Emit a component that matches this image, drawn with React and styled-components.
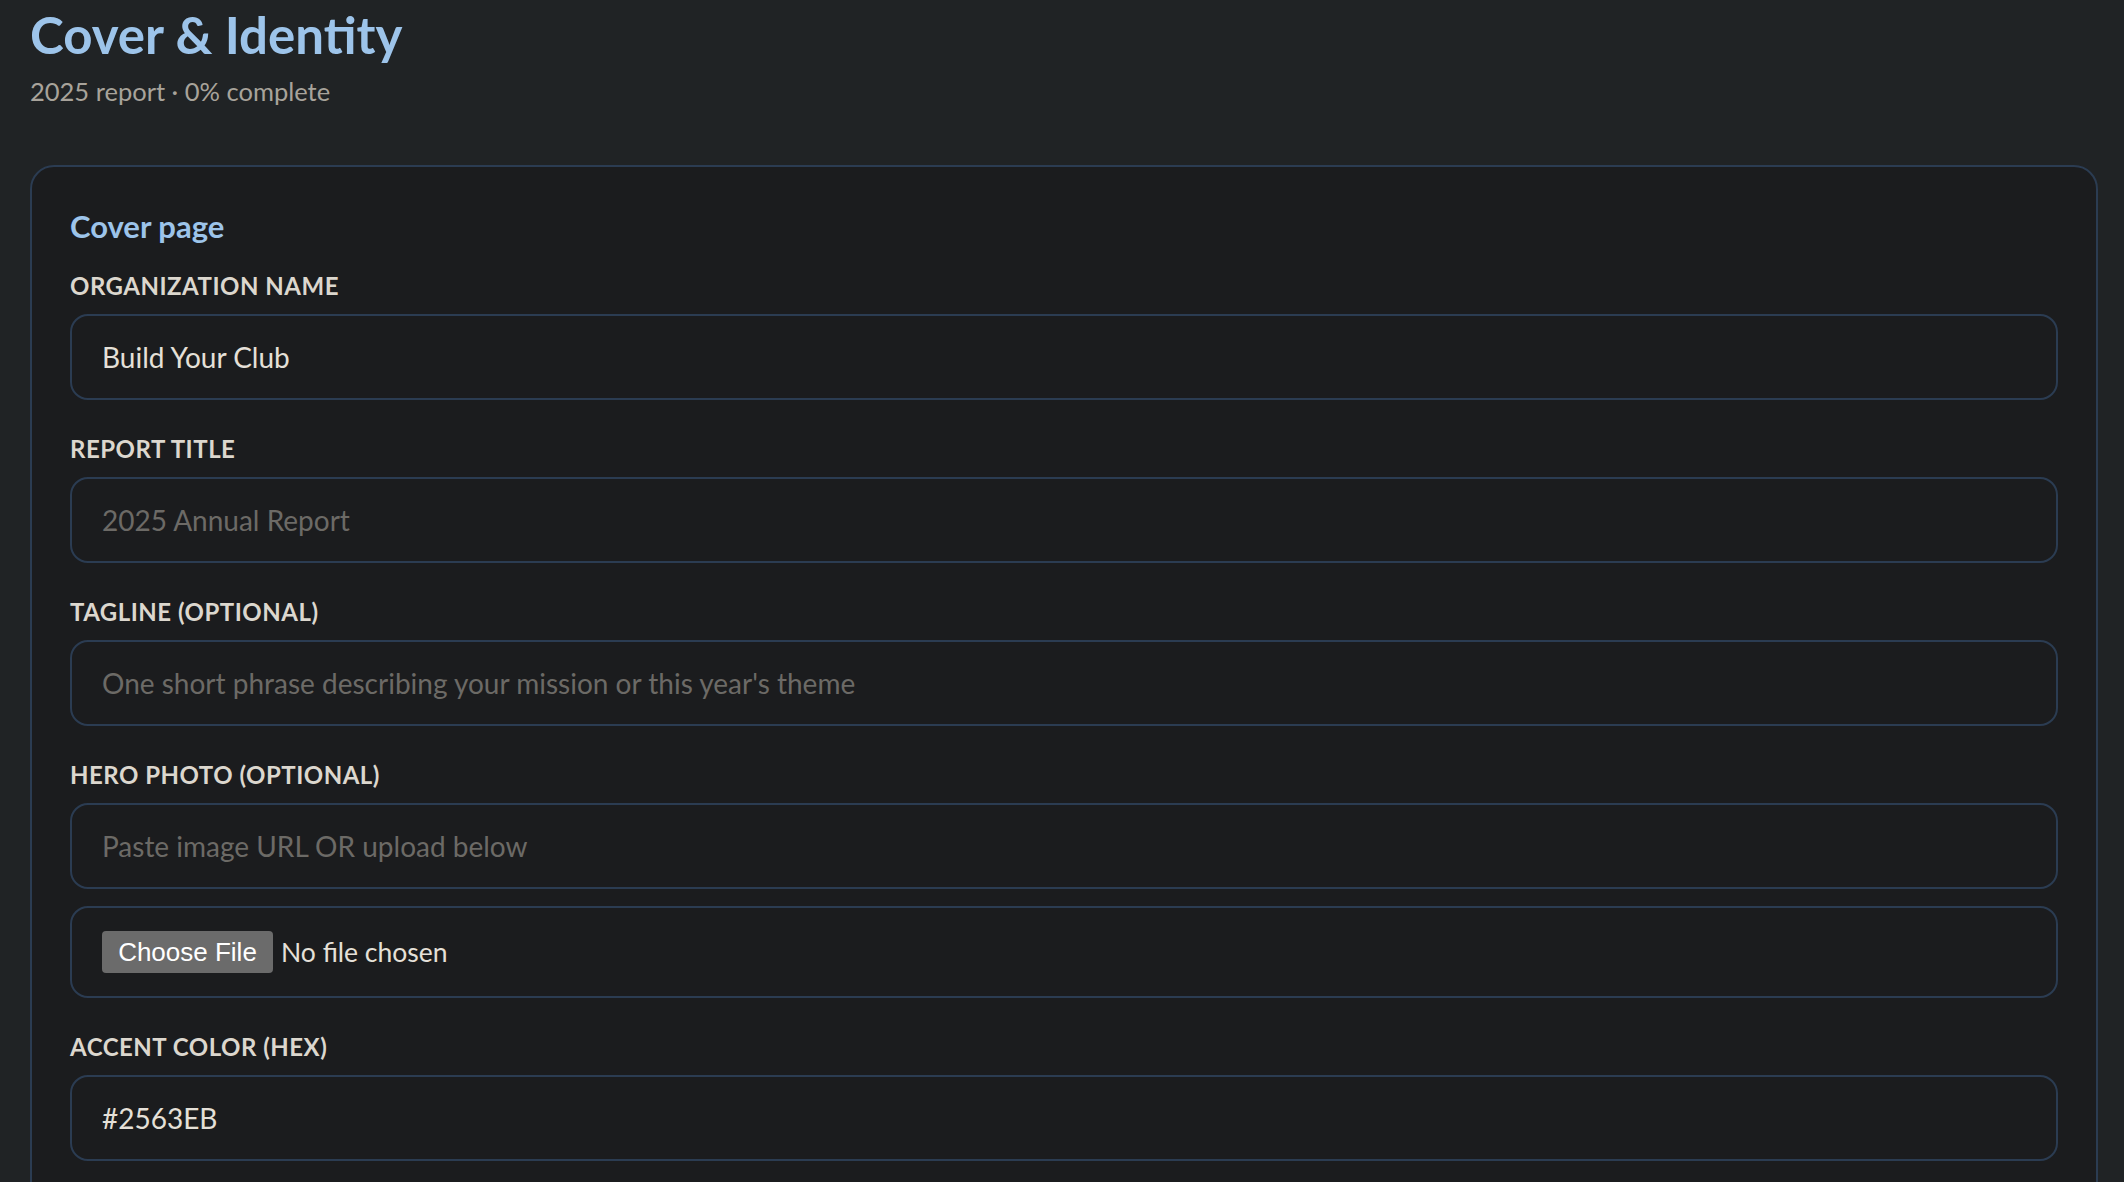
import React from 'react'
import styled, { createGlobalStyle } from 'styled-components'

const GlobalStyle = createGlobalStyle`
  html {
    scrollbar-width: none;
  }
  html, body {
    margin: 0;
    background: #202325;
  }
  body {
    font-family: Lato, "Open Sans", sans-serif;
    color: #e4dfd7;
  }
`

const Page = styled.div`
  box-sizing: border-box;
  min-height: 100vh;
  padding: 7px 26px 0 30px;
`

const Title = styled.h1`
  margin: 0;
  font-size: 51px;
  line-height: 56px;
  font-weight: 700;
  color: #9dc4ea;
`

const Subtitle = styled.div`
  margin-top: 12px;
  font-size: 25.5px;
  line-height: 32px;
  color: #a8a39b;
`

const Card = styled.section`
  margin-top: 58px;
  background: #1b1c1e;
  border: 2px solid #2b3c52;
  border-radius: 24px;
  padding: 41px 38px 40px;
`

const SectionTitle = styled.h2`
  margin: 0 0 27px;
  font-size: 31px;
  line-height: 36px;
  font-weight: 700;
  color: #9dc4ea;
`

const Field = styled.div`
  margin-bottom: 34px;
`

const Label = styled.label`
  display: block;
  margin-bottom: 13px;
  font-size: 24px;
  line-height: 30px;
  font-weight: 700;
  letter-spacing: 0.5px;
  text-transform: uppercase;
  color: #dcd7ce;
`

const Input = styled.input`
  display: block;
  box-sizing: border-box;
  width: 100%;
  height: 86px;
  padding: 0 30px;
  background: #1b1c1e;
  border: 2px solid #2b3c52;
  border-radius: 18px;
  outline: none;
  font-family: inherit;
  font-size: 28px;
  color: #e5e0d8;

  &::placeholder {
    color: #6c6a66;
  }
`

const FileBox = styled.div`
  box-sizing: border-box;
  display: flex;
  align-items: center;
  gap: 8px;
  height: 92px;
  margin-top: 17px;
  padding: 0 30px;
  border: 2px solid #2b3c52;
  border-radius: 18px;
`

const FileButton = styled.span`
  display: inline-flex;
  align-items: center;
  justify-content: center;
  width: 171px;
  height: 42px;
  border-radius: 4px;
  background: #6b6b6b;
  font-family: "Liberation Sans", Arial, sans-serif;
  font-size: 26px;
  color: #ffffff;
`

const FileStatus = styled.span`
  font-size: 26.5px;
  color: #e5e0d8;
`

export default function App() {
  return (
    <Page>
      <GlobalStyle />
      <Title>Cover &amp; Identity</Title>
      <Subtitle>2025 report · 0% complete</Subtitle>

      <Card>
        <SectionTitle>Cover page</SectionTitle>

        <Field>
          <Label>Organization name</Label>
          <Input defaultValue="Build Your Club" />
        </Field>

        <Field>
          <Label>Report title</Label>
          <Input placeholder="2025 Annual Report" />
        </Field>

        <Field>
          <Label>Tagline (optional)</Label>
          <Input placeholder="One short phrase describing your mission or this year's theme" />
        </Field>

        <Field>
          <Label>Hero photo (optional)</Label>
          <Input placeholder="Paste image URL OR upload below" />
          <FileBox>
            <FileButton>Choose File</FileButton>
            <FileStatus>No file chosen</FileStatus>
          </FileBox>
        </Field>

        <Field>
          <Label>Accent color (hex)</Label>
          <Input defaultValue="#2563EB" />
        </Field>
      </Card>
    </Page>
  )
}
